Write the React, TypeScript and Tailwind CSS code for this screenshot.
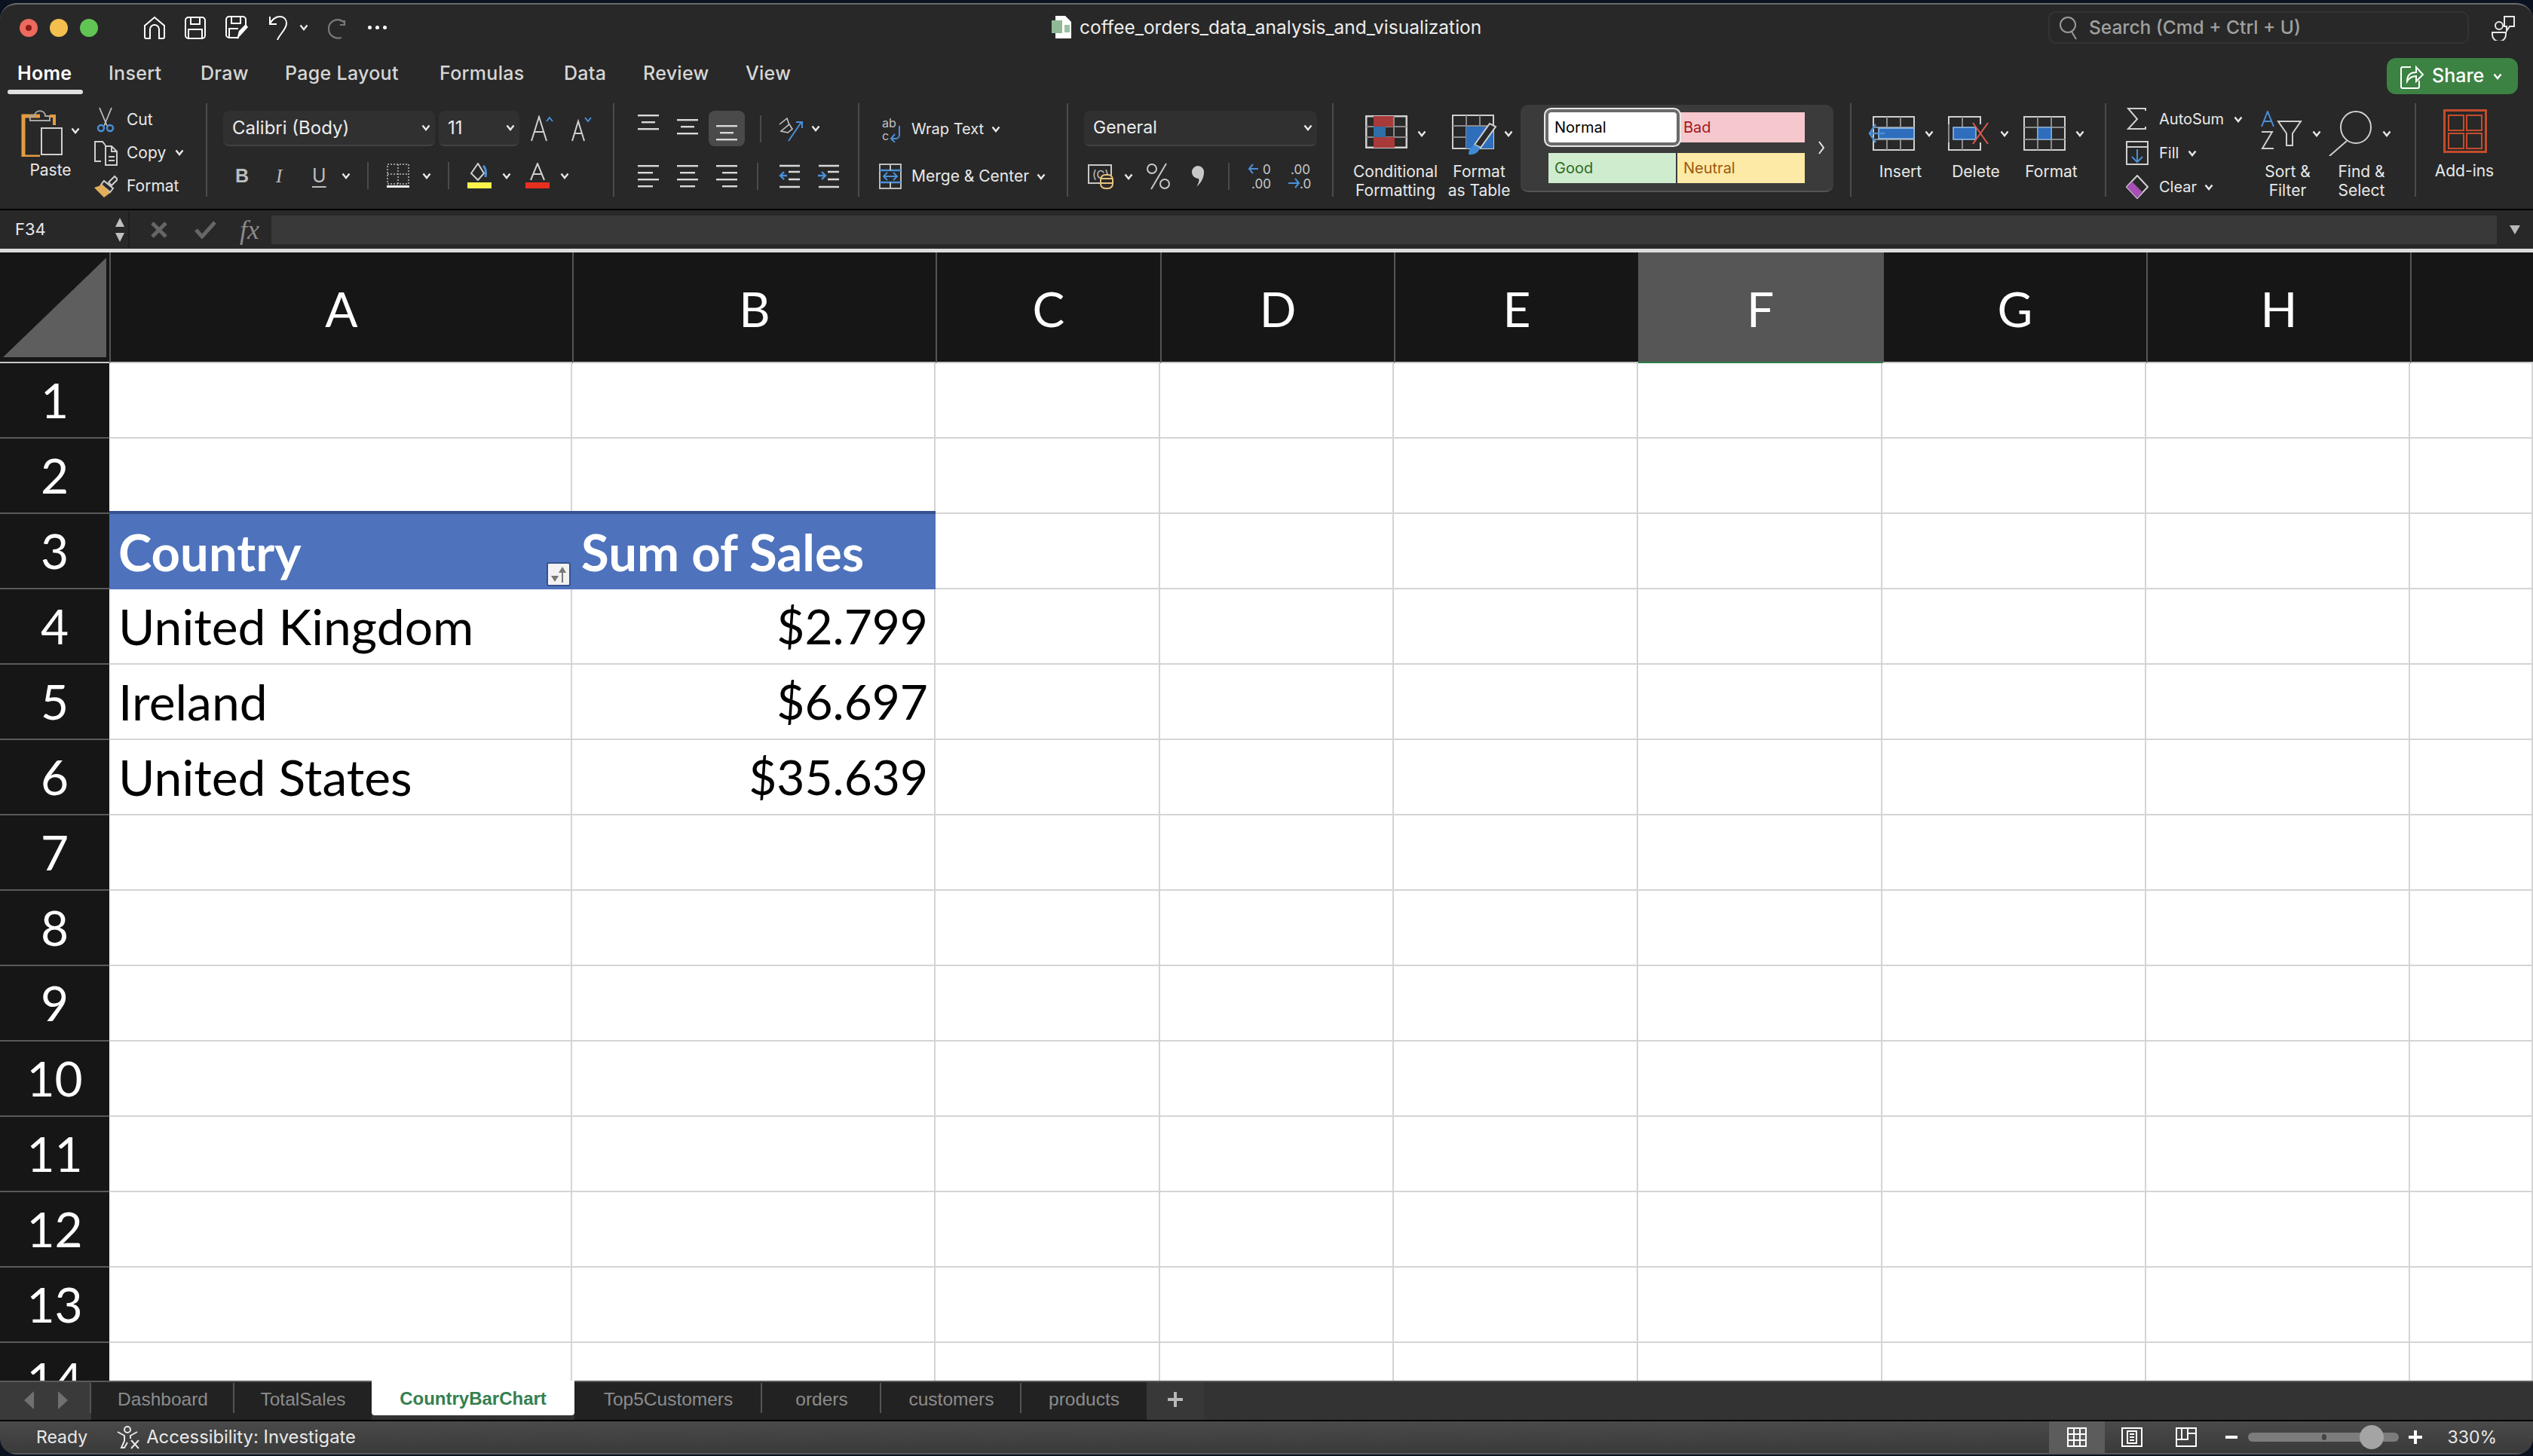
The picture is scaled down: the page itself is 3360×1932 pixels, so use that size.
import type { ReactNode } from 'react'

const LINE = '#cfcfcf'
const BLUE = '#4a90d9'

function Ico({ w, h, children, className }: { w: number; h: number; children: ReactNode; className?: string }) {
  return (
    <svg width={w} height={h} viewBox={`0 0 ${w} ${h}`} fill="none" className={`shrink-0 ${className ?? ''}`}>
      {children}
    </svg>
  )
}

function Chev({ className, color = '#e8e8e8' }: { className?: string; color?: string }) {
  return (
    <Ico w={12} h={9} className={className}>
      <path d="M1.5 1.5 6 7l4.5-5.5" stroke={color} strokeWidth={2.4} />
    </Ico>
  )
}

function AlignIcon({ y, mode }: { y: number; mode: 'l' | 'c' | 'r' | 'vt' | 'vm' | 'vb' }) {
  const rows = mode === 'vt' || mode === 'vm' || mode === 'vb'
  const off = mode === 'vt' ? 0 : mode === 'vm' ? 6 : 14
  if (rows) {
    return (
      <Ico w={30} h={44}>
        {[0, 1, 2].map(i => {
          const inset = i === 1 ? 5 : 0
          return <rect key={i} x={1 + inset} y={y + off + i * 9} width={28 - inset * 2} height={2.4} fill="#d8d8d8" />
        })}
      </Ico>
    )
  }
  return (
    <Ico w={30} h={32}>
      {[0, 1, 2, 3].map(i => {
        const short = i % 2 === 1
        const width = short ? 20 : 28
        const x = mode === 'l' ? 1 : mode === 'c' ? 15 - width / 2 : 29 - width
        return <rect key={i} x={x} y={1 + i * 9} width={width} height={2.4} fill="#d8d8d8" />
      })}
    </Ico>
  )
}

function SmallGrid({ children }: { children?: ReactNode }) {
  return (
    <Ico w={62} h={48}>
      <rect x={7} y={2} width={54} height={44} stroke={LINE} strokeWidth={2} />
      <path d="M7 16h54M7 32h54M25 2v44M43 2v44" stroke="#8c8c8c" strokeWidth={2} />
      {children}
    </Ico>
  )
}

function TopBar() {
  return (
    <div className="relative flex h-[67px] shrink-0 items-center pb-[6px]">
      <div className="flex w-[190px] shrink-0 gap-[16px] pl-[26px]">
        <span className="flex h-[24px] w-[24px] items-center justify-center rounded-full bg-[#ed6a5e]">
          <span className="h-[8px] w-[8px] rounded-full bg-[#8c1d18]" />
        </span>
        <span className="h-[24px] w-[24px] rounded-full bg-[#f4bf4f]" />
        <span className="h-[24px] w-[24px] rounded-full bg-[#61c554]" />
      </div>
      <div className="flex items-center">
        <Ico w={30} h={32} className="mr-[25px]">
          <path d="M2 13 15 2l13 11v15a2 2 0 0 1-2 2h-5V18a6 6 0 0 0-12 0v12H4a2 2 0 0 1-2-2z" stroke="#fff" strokeWidth={2} />
        </Ico>
        <Ico w={28} h={30} className="mr-[26px]">
          <path d="M1 5a4 4 0 0 1 4-4h18a4 4 0 0 1 4 4v20a4 4 0 0 1-4 4H5a4 4 0 0 1-4-4zM8 1v9h12V1M5 29V17h18v12" stroke="#fff" strokeWidth={2} />
        </Ico>
        <Ico w={32} h={32} className="mr-[24px]">
          <path d="M18 29H5a4 4 0 0 1-4-4V5a4 4 0 0 1 4-4h18a4 4 0 0 1 4 4v8M8 1v9h12V1M5 29V17h12" stroke="#fff" strokeWidth={2} />
          <path d="M15 31l3-11 9-9 3 4-9 10z" fill="#fff" />
        </Ico>
        <Ico w={28} h={34} className="mr-[14px]">
          <path d="M3 2v10h9M3 12c2-5 7-10 13-10 6 0 9 4 9 9 0 8-9 14-12 22" stroke="#fff" strokeWidth={2} />
        </Ico>
        <Chev className="mr-[23px]" />
        <Ico w={28} h={30} className="mr-[28px]">
          <path d="M25 5v6h-6M25 8C16 0 4 6 4 16s9 14 17 12" stroke="#7a7a7a" strokeWidth={2.2} />
        </Ico>
        <span className="flex gap-[5px]">
          <span className="h-[5px] w-[5px] rounded-full bg-white" />
          <span className="h-[5px] w-[5px] rounded-full bg-white" />
          <span className="h-[5px] w-[5px] rounded-full bg-white" />
        </span>
      </div>

      <div className="absolute left-[1395px] top-[14px] flex items-center">
        <Ico w={28} h={32} className="mr-[9px]">
          <path d="M5 1h13l8 8v22H5z" fill="#fff" />
          <rect x={0} y={7} width={14} height={17} fill="#8fb996" />
          <path d="M17 13h7v10h-7z" fill="#9bc0a2" />
        </Ico>
        <span className="text-[24.5px] leading-none text-[#ececec]">coffee_orders_data_analysis_and_visualization</span>
      </div>

      <div className="absolute left-[2717px] top-[9px] flex h-[43px] w-[558px] items-center rounded-[10px] border-2 border-[#333] pl-[12px]">
        <Ico w={26} h={34} className="mr-[14px]">
          <circle cx={12} cy={13} r={10} stroke="#9a9a9a" strokeWidth={2} />
          <path d="m17 22 6 10" stroke="#9a9a9a" strokeWidth={2} />
        </Ico>
        <span className="text-[24.5px] font-medium text-[#a0a0a0]">Search (Cmd + Ctrl + U)</span>
      </div>

      <Ico w={32} h={34} className="absolute left-[3305px] top-[14px]">
        <circle cx={10} cy={14} r={5} stroke="#e8e8e8" strokeWidth={2} />
        <path d="M1 23h18v3a8 8 0 0 1-18 0z" stroke="#e8e8e8" strokeWidth={2} />
        <path d="M17 2h13v13h-6l-4 6v-6h-3z" stroke="#e8e8e8" strokeWidth={2} />
      </Ico>
    </div>
  )
}

const TABS: [string, number][] = [
  ['Home', 121],
  ['Insert', 122],
  ['Draw', 112],
  ['Page Layout', 205],
  ['Formulas', 165],
  ['Data', 105],
  ['Review', 136],
  ['View', 100],
]

function TabBar() {
  return (
    <div className="relative flex h-[52px] shrink-0 items-start pl-[23px] pt-[10px]">
      {TABS.map(([t, w], i) => (
        <div key={t} style={{ width: w }} className={`text-[25px] leading-[28px] tracking-[0.3px] ${i === 0 ? 'font-semibold text-white' : 'font-medium text-[#d6d6d6]'}`}>
          {t}
          {i === 0 && <div className="absolute left-[10px] top-[46px] h-[6px] w-[100px] rounded-[3px] bg-[#e0e0e0]" />}
        </div>
      ))}
      <div className="absolute left-[3166px] top-[4px] flex h-[48px] w-[174px] items-center rounded-[12px] bg-[#3c8243] pl-[18px] text-white">
        <Ico w={32} h={36} className="mr-[10px]">
          <path d="M14 6H3a2 2 0 0 0-2 2v24a2 2 0 0 0 2 2h20a2 2 0 0 0 2-2v-8" stroke="#fff" strokeWidth={2} />
          <path d="M9 25c0-9 5-12 12-12V6l9 10-9 9v-7c-5 0-9 2-12 7z" stroke="#fff" strokeWidth={2} />
        </Ico>
        <span className="mr-[12px] text-[25px] font-medium">Share</span>
        <Chev color="#fff" />
      </div>
    </div>
  )
}

function Group({ w, children, border = true, className }: { w: number; children: ReactNode; border?: boolean; className?: string }) {
  return (
    <div style={{ width: w }} className={`relative h-[124px] shrink-0 ${border ? 'border-r-2 border-[#4b4b4b]' : ''} ${className ?? ''}`}>
      {children}
    </div>
  )
}

function Select({ w, label, size = 'text-[24px]' }: { w: number; label: string; size?: string }) {
  return (
    <div style={{ width: w }} className="flex h-[47px] shrink-0 items-center justify-between rounded-[8px] border-b-2 border-[#424242] bg-[#303030] pl-[12px] pr-[6px]">
      <span className={`${size} text-[#ececec]`}>{label}</span>
      <Chev />
    </div>
  )
}

function BigLabel({ children }: { children: ReactNode }) {
  return <div className="text-center text-[21px] leading-[25px] text-[#e8e8e8]">{children}</div>
}

function ClipboardGroup() {
  return (
    <Group w={275} className="flex">
      <div className="flex w-[124px] shrink-0 flex-col items-center pl-[10px] pt-[9px]">
        <div className="flex items-center">
          <Ico w={58} h={62}>
            <path d="M25 8H3v54h22" stroke="#e29c42" strokeWidth={5} />
            <path d="M12 14V8h6c0-9 14-9 14 0h6v6z" stroke="#a8a8a8" strokeWidth={2} />
            <path d="M38 8h6v12" stroke="#e29c42" strokeWidth={4} />
            <rect x={27} y={24} width={27} height={35} stroke={LINE} strokeWidth={2} />
          </Ico>
          <Chev className="ml-[8px] mt-[-8px]" />
        </div>
        <span className="mt-[6px] text-[21px] leading-[24px] text-[#e8e8e8]">Paste</span>
      </div>
      <div className="flex flex-col gap-[13px] pt-[6px]">
        <div className="flex h-[31px] items-center">
          <Ico w={32} h={34} className="mr-[12px]">
            <path d="m8 1 10 24M24 1 14 25" stroke="#bdbdbd" strokeWidth={1.8} />
            <circle cx={10} cy={28} r={4} stroke={BLUE} strokeWidth={2.4} />
            <circle cx={22} cy={28} r={4} stroke={BLUE} strokeWidth={2.4} />
          </Ico>
          <span className="text-[21px] text-[#e8e8e8]">Cut</span>
        </div>
        <div className="flex h-[31px] items-center">
          <Ico w={32} h={34} className="mr-[12px]">
            <path d="M10 28H2V2h10l4 5" stroke={LINE} strokeWidth={2} />
            <path d="M16 8h8l7 7v18H16zM24 8v7h7M20 22h8M20 27h8" stroke={LINE} strokeWidth={2} />
          </Ico>
          <span className="mr-[12px] text-[21px] text-[#e8e8e8]">Copy</span>
          <Chev />
        </div>
        <div className="flex h-[31px] items-center">
          <Ico w={32} h={34} className="mr-[12px]">
            <path d="m20 12 8-8 4 4-8 8z" stroke={LINE} strokeWidth={2} />
            <path d="m14 10 12 10-4 5L10 15z" stroke={LINE} strokeWidth={2} />
            <path d="M1 19 12 15l10 11-8 6z" fill="#e3ad5a" />
          </Ico>
          <span className="text-[21px] text-[#e8e8e8]">Format</span>
        </div>
      </div>
    </Group>
  )
}

function FontGroup() {
  return (
    <Group w={540} className="flex flex-col gap-[21px] pl-[21px] pt-[10px]">
      <div className="flex items-center">
        <Select w={281} label="Calibri (Body)" />
        <div className="ml-[5px] mr-[15px]"><Select w={107} label="11" /></div>
        <Ico w={30} h={36} className="mr-[24px]">
          <path d="M1 34 11 2l10 32M5 22h12" stroke="#d0d0d0" strokeWidth={2} />
          <path d="m21 8 4-5 4 5" stroke={BLUE} strokeWidth={2} />
        </Ico>
        <Ico w={28} h={36}>
          <path d="M1 34 9 8l8 26M4 24h10" stroke="#d0d0d0" strokeWidth={2} />
          <path d="m18 3 4 5 4-5" stroke={BLUE} strokeWidth={2} />
        </Ico>
      </div>
      <div className="flex items-center">
        <span className="w-[56px] pl-[16px] text-[25px] font-bold leading-none text-[#bdbdbd] [font-family:'Liberation_Sans',sans-serif]">B</span>
        <span className="w-[50px] pl-[14px] text-[25px] italic leading-none text-[#bdbdbd] [font-family:'Liberation_Serif',serif]">I</span>
        <span className="w-[51px] pl-[12px] text-[25px] leading-none text-[#bdbdbd] underline underline-offset-[5px]">U</span>
        <Chev className="mr-[22px]" />
        <div className="mr-[23px] h-[36px] w-[2px] bg-[#4b4b4b]" />
        <Ico w={32} h={34} className="mr-[16px]">
          <path d="M2 2h28v26H2zM16 2v26M2 15h28" stroke="#bdbdbd" strokeWidth={1.5} strokeDasharray="2 2" />
          <rect x={1} y={30} width={30} height={3} fill="#f0f0f0" />
        </Ico>
        <Chev className="mr-[22px]" />
        <div className="mr-[24px] h-[36px] w-[2px] bg-[#4b4b4b]" />
        <div className="mr-[14px] flex flex-col items-center">
          <Ico w={32} h={24}>
            <path d="M5 14 14 1l8 13-8 9z" stroke="#d0d0d0" strokeWidth={2} />
            <path d="M21 4c4 3 4 9 3 15" stroke={BLUE} strokeWidth={3} />
          </Ico>
          <span className="mt-[2px] h-[8px] w-[32px] bg-[#fdf24b]" />
        </div>
        <Chev className="mr-[19px]" />
        <div className="mr-[14px] flex flex-col items-center">
          <Ico w={32} h={24}>
            <path d="M7 23 16 1l9 22M10 15h12" stroke="#d0d0d0" strokeWidth={2} />
          </Ico>
          <span className="mt-[2px] h-[8px] w-[32px] bg-[#e8301f]" />
        </div>
        <Chev />
      </div>
    </Group>
  )
}

function AlignGroup() {
  return (
    <Group w={325} className="flex flex-col gap-[16px] pl-[30px] pt-[10px]">
      <div className="flex h-[47px] items-center">
        <div className="w-[52px]"><AlignIcon y={3} mode="vt" /></div>
        <div className="w-[43px]"><AlignIcon y={3} mode="vm" /></div>
        <div className="flex h-[47px] w-[48px] items-center justify-center rounded-[8px] bg-[#4a4a4a]"><AlignIcon y={3} mode="vb" /></div>
        <div className="ml-[20px] mr-[22px] h-[36px] w-[2px] bg-[#4b4b4b]" />
        <Ico w={34} h={34} className="mr-[10px]">
          <path d="m14 33 17-25M24 8h8v8" stroke={BLUE} strokeWidth={2} />
          <path d="m2 11 10-8 3 9M4 20l11-9 4 6-6 5z" stroke="#c8c8c8" strokeWidth={1.6} />
        </Ico>
        <Chev />
      </div>
      <div className="flex h-[48px] items-center">
        <div className="w-[52px]"><AlignIcon y={0} mode="l" /></div>
        <div className="w-[52px]"><AlignIcon y={0} mode="c" /></div>
        <div className="w-[37px]"><AlignIcon y={0} mode="r" /></div>
        <div className="ml-[18px] mr-[26px] h-[36px] w-[2px] bg-[#4b4b4b]" />
        <Ico w={30} h={32} className="mr-[22px]">
          <path d="M2 2h27M14 10h15M14 20h15M2 30h27" stroke="#d8d8d8" strokeWidth={2.4} />
          <path d="M12 15H3m5-5-5 5 5 5" stroke={BLUE} strokeWidth={2.4} />
        </Ico>
        <Ico w={30} h={32}>
          <path d="M2 2h27M14 10h15M14 20h15M2 30h27" stroke="#d8d8d8" strokeWidth={2.4} />
          <path d="M1 15h10m-5-5 5 5-5 5" stroke={BLUE} strokeWidth={2.4} />
        </Ico>
      </div>
    </Group>
  )
}

function WrapGroup() {
  return (
    <Group w={277} className="flex flex-col gap-[27px] pl-[26px] pt-[16px]">
      <div className="flex h-[36px] items-center">
        <div className="w-[43px]">
          <Ico w={32} h={36} className="ml-[3px]">
            <text x={1} y={16} fontSize={16} fill="#c0c0c0">ab</text>
            <text x={1} y={33} fontSize={16} fill="#c0c0c0">c</text>
            <path d="M24 14v12a5 5 0 0 1-5 5h-6m5-6-5 6 5 5" stroke={BLUE} strokeWidth={2} />
          </Ico>
        </div>
        <span className="mr-[10px] text-[20px] text-[#e8e8e8]">Wrap Text</span>
        <Chev />
      </div>
      <div className="flex h-[36px] items-center">
        <div className="w-[43px]">
          <Ico w={30} h={34}>
            <rect x={1} y={1} width={28} height={32} stroke="#bdbdbd" strokeWidth={2} />
            <path d="M1 9h28M1 25h28" stroke={BLUE} strokeWidth={2.4} />
            <path d="M6 17h18m-13-5-5 5 5 5m8-10 5 5-5 5" stroke={BLUE} strokeWidth={2} />
            <path d="M15 1v8M15 25v8" stroke="#bdbdbd" strokeWidth={2} />
          </Ico>
        </div>
        <span className="mr-[10px] text-[21px] text-[#e8e8e8]">Merge &amp; Center</span>
        <Chev />
      </div>
    </Group>
  )
}

function NumberGroup() {
  return (
    <Group w={352} className="flex flex-col gap-[16px] pl-[21px] pt-[10px]">
      <Select w={309} label="General" size="text-[23px]" />
      <div className="flex h-[48px] items-center">
        <Ico w={34} h={34} className="ml-[5px] mr-[14px]">
          <rect x={1} y={2} width={30} height={24} stroke="#c8c8c8" strokeWidth={2} />
          <text x={6} y={20} fontSize={15} fill="#c8c8c8">{'(C)'}</text>
          <rect x={17} y={15} width={16} height={18} rx={6} fill="#2a2a2a" stroke="#e6c27a" strokeWidth={2} />
          <path d="M17 20h16M17 26h16" stroke="#e6c27a" strokeWidth={2} />
        </Ico>
        <Chev className="mr-[18px]" />
        <Ico w={32} h={38} className="mr-[27px]">
          <circle cx={7} cy={9} r={6} stroke="#c8c8c8" strokeWidth={2} />
          <circle cx={24} cy={29} r={6} stroke="#c8c8c8" strokeWidth={2} />
          <path d="M26 2 6 36" stroke="#c8c8c8" strokeWidth={2} />
        </Ico>
        <Ico w={20} h={30} className="mr-[29px]">
          <path d="M9 1a8 8 0 0 1 8 9c0 7-4 14-10 19 3-5 4-8 3-11a8.500 8.500 0 0 1-1-17z" fill="#c8c8c8" />
        </Ico>
        <div className="mr-[24px] h-[36px] w-[2px] bg-[#4b4b4b]" />
        <Ico w={33} h={40} className="mr-[20px]">
          <path d="M14 10H2m5-6-5 6 5 6" stroke={BLUE} strokeWidth={2} />
          <text x={20} y={17} fontSize={17} fill="#c8c8c8">0</text>
          <text x={5} y={36} fontSize={17} fill="#c8c8c8">.00</text>
        </Ico>
        <Ico w={33} h={40}>
          <text x={4} y={17} fontSize={17} fill="#c8c8c8">.00</text>
          <path d="M1 29h14m-5-6 5 6-5 6" stroke={BLUE} strokeWidth={2} />
          <text x={16} y={36} fontSize={17} fill="#c8c8c8">.0</text>
        </Ico>
      </div>
    </Group>
  )
}

function StyleCell({ label, bg, fg }: { label: string; bg: string; fg: string }) {
  return (
    <div style={{ backgroundColor: bg, color: fg }} className="flex h-[40px] w-[169px] items-center pl-[8px] text-[20px]">
      {label}
    </div>
  )
}

function StylesGroup() {
  return (
    <div className="flex h-[124px] shrink-0">
      <div className="flex w-[248px] flex-col pl-[42px] pt-[16px]">
        <div className="flex items-start">
          <Ico w={56} h={44}>
            <rect x={1} y={1} width={54} height={42} stroke={LINE} strokeWidth={3} />
            <path d="M1 15h54M1 29h54M21 1v42M38 1v42" stroke="#8a8a8a" strokeWidth={2} />
            <rect x={11} y={1} width={26} height={14} fill="#a83a3a" />
            <rect x={11} y={15} width={16} height={14} fill="#2f6ea8" />
            <rect x={11} y={29} width={28} height={14} fill="#a83a3a" />
          </Ico>
          <Chev className="ml-[13px] mr-[34px] mt-[20px]" />
          <Ico w={60} h={55} className="mt-[-1px]">
            <rect x={1} y={1} width={54} height={44} stroke={LINE} strokeWidth={2} />
            <path d="M1 15h54M1 30h54M19 1v44M37 1v44" stroke="#8a8a8a" strokeWidth={2} />
            <rect x={19} y={16} width={36} height={29} fill="#2e6ebd" />
            <path d="M30 40 50 12l8 4-20 28z" fill="#2a2a2a" stroke="#d0d0d0" strokeWidth={2} />
            <path d="M30 40c-4 2-8 6-8 13 8 1 14-3 15-9z" fill="#3f8ad4" />
          </Ico>
          <Chev className="ml-[9px] mt-[20px]" />
        </div>
        <div className="ml-[-16px] mt-[8px] flex">
          <div className="w-[113px]"><BigLabel>Conditional<br />Formatting</BigLabel></div>
          <div className="w-[114px]"><BigLabel>Format<br />as Table</BigLabel></div>
        </div>
      </div>
      <div className="mt-[2px] flex h-[116px] w-[415px] items-center rounded-[10px] border-b-2 border-[#555] bg-[#3b3b3b] pl-[37px]">
        <div className="grid w-[341px] grid-cols-[171px_170px] items-center gap-y-[14px]">
          <div className="relative flex h-[40px] w-[170px] items-center rounded-[4px] bg-white pl-[8px] text-[20px] text-black shadow-[0_0_0_4px_#6b6b6b,0_0_0_6px_#e8e8e8]">
            Normal
          </div>
          <StyleCell label="Bad" bg="#f7c7ce" fg="#9c1c1c" />
          <StyleCell label="Good" bg="#cfeccf" fg="#2f6a1f" />
          <StyleCell label="Neutral" bg="#fdeaa6" fg="#9a5a10" />
        </div>
        <Ico w={10} h={20} className="ml-[16px]">
          <path d="m2 2 6 8-6 8" stroke="#e8e8e8" strokeWidth={2} />
        </Ico>
      </div>
      <div className="ml-[22px] h-[124px] w-[2px] bg-[#4b4b4b]" />
    </div>
  )
}

function CellsGroup() {
  return (
    <Group w={338} className="pl-[22px] pt-[16px]">
      <div className="flex items-start">
        <SmallGrid>
          <rect x={14} y={17} width={47} height={14} fill="#2e6ebd" stroke="#9ac2ec" strokeWidth={1.5} />
          <path d="M22 24H2m8-12L2 24l8 12" stroke={BLUE} strokeWidth={2.5} />
        </SmallGrid>
        <Chev className="ml-[13px] mr-[18px] mt-[20px]" />
        <Ico w={58} h={48}>
          <path d="M2 12V2h42v10M2 36v10h42V36" stroke={LINE} strokeWidth={2} />
          <path d="M2 12v24M20 2v44" stroke="#8a8a8a" strokeWidth={2} />
          <rect x={8} y={16} width={30} height={16} fill="#2e6ebd" stroke="#9ac2ec" strokeWidth={1.5} />
          <path d="m34 10 20 28M54 10 34 38" stroke="#dd5a4a" strokeWidth={2} />
        </Ico>
        <Chev className="ml-[12px] mr-[19px] mt-[20px]" />
        <Ico w={56} h={50} className="mt-[-2px]">
          <rect x={1} y={4} width={54} height={44} stroke={LINE} strokeWidth={2} />
          <path d="M1 18h54M1 34h54M19 4v44M37 4v44" stroke="#8a8a8a" strokeWidth={2} />
          <rect x={19} y={18} width={18} height={16} fill="#2e6ebd" stroke="#9ac2ec" />
        </Ico>
        <Chev className="ml-[13px] mt-[20px]" />
      </div>
      <div className="mt-[14px] flex">
        <div className="w-[86px]"><BigLabel>Insert</BigLabel></div>
        <div className="ml-[17px] w-[80px]"><BigLabel>Delete</BigLabel></div>
        <div className="ml-[20px] w-[80px]"><BigLabel>Format</BigLabel></div>
      </div>
    </Group>
  )
}

function EditingGroup() {
  return (
    <Group w={411} className="flex">
      <div className="flex w-[204px] shrink-0 flex-col gap-[15px] pl-[26px] pt-[6px]">
        <div className="flex h-[30px] items-center">
          <Ico w={30} h={30} className="mr-[14px]">
            <path d="M26 4V1H3l12 14L3 28h23v-3" stroke={LINE} strokeWidth={2} />
          </Ico>
          <span className="mr-[13px] text-[20px] text-[#e8e8e8]">AutoSum</span>
          <Chev />
        </div>
        <div className="flex h-[30px] items-center">
          <Ico w={30} h={32} className="mr-[14px]">
            <rect x={1} y={1} width={28} height={30} stroke={LINE} strokeWidth={2} />
            <path d="M1 8h28" stroke={LINE} strokeWidth={2} />
            <path d="M15 11v16m-7-6 7 7 7-7" stroke={BLUE} strokeWidth={2} />
          </Ico>
          <span className="mr-[12px] text-[20px] text-[#e8e8e8]">Fill</span>
          <Chev />
        </div>
        <div className="flex h-[30px] items-center">
          <Ico w={30} h={32} className="mr-[14px]">
            <path d="M15 1 29 16 15 31 1 16z" stroke={LINE} strokeWidth={2} />
            <path d="M8 9 22 23l-7 8L1 16z" fill="#a64fb5" />
          </Ico>
          <span className="mr-[10px] text-[20px] text-[#e8e8e8]">Clear</span>
          <Chev />
        </div>
      </div>
      <div className="flex flex-col pt-[10px]">
        <div className="flex items-start">
          <Ico w={58} h={54}>
            <path d="M2 21 10 1l8 20M5 14h10" stroke={BLUE} strokeWidth={2} />
            <path d="M2 28h14L3 50h15" stroke={LINE} strokeWidth={2} />
            <path d="M24 14h30L43 30v16h-8V30z" stroke={LINE} strokeWidth={2} />
          </Ico>
          <Chev className="ml-[11px] mr-[9px] mt-[26px]" />
          <Ico w={58} h={60}>
            <ellipse cx={37} cy={22} rx={20} ry={21} stroke={LINE} strokeWidth={2} />
            <path d="M25 40 2 60" stroke={LINE} strokeWidth={2} />
          </Ico>
          <Chev className="ml-[14px] mt-[26px]" />
        </div>
        <div className="ml-[-6px] mt-[8px] flex">
          <div className="w-[85px]"><BigLabel>Sort &amp;<br />Filter</BigLabel></div>
          <div className="ml-[13px] w-[85px]"><BigLabel>Find &amp;<br />Select</BigLabel></div>
        </div>
      </div>
    </Group>
  )
}

function AddinsGroup() {
  return (
    <div className="flex h-[124px] w-[128px] shrink-0 flex-col items-center pt-[8px]">
      <Ico w={58} h={58} className="ml-[2px]">
        <rect x={1.5} y={1.5} width={55} height={55} stroke="#c44c2c" strokeWidth={3} />
        <rect x={7} y={8} width={20} height={20} stroke="#c44c2c" strokeWidth={2} />
        <rect x={31} y={8} width={20} height={20} stroke="#c44c2c" strokeWidth={2} />
        <rect x={7} y={32} width={20} height={20} stroke="#c44c2c" strokeWidth={2} />
        <rect x={31} y={32} width={20} height={20} stroke="#c44c2c" strokeWidth={2} />
      </Ico>
      <div className="mt-[11px]"><BigLabel>Add-ins</BigLabel></div>
    </div>
  )
}

function Ribbon() {
  return (
    <div className="flex h-[152px] shrink-0 pt-[12px]">
      <ClipboardGroup />
      <FontGroup />
      <AlignGroup />
      <WrapGroup />
      <NumberGroup />
      <StylesGroup />
      <CellsGroup />
      <EditingGroup />
      <AddinsGroup />
    </div>
  )
}

function FormulaBar() {
  return (
    <div className="flex h-[56px] shrink-0 items-center border-b-[5px] border-[#dcdcdc] bg-[#282828]" >
      <span className="w-[148px] pl-[20px] text-[22px] text-[#e8e8e8]">F34</span>
      <div className="flex w-[22px] flex-col items-center gap-[6px]">
        <Ico w={14} h={14}><path d="M7 1l6 12H1z" fill="#c0c0c0" /></Ico>
        <Ico w={14} h={14}><path d="M7 13 1 1h12z" fill="#c0c0c0" /></Ico>
      </div>
      <div className="h-[48px] w-[2px] bg-[#1e1e1e]" />
      <div className="flex w-[188px] items-center pl-[28px]">
        <Ico w={22} h={22} className="mr-[36px]"><path d="m2 2 18 18M20 2 2 20" stroke="#666" strokeWidth={5} /></Ico>
        <Ico w={30} h={24} className="mr-[30px]"><path d="m2 12 8 9L27 2" stroke="#666" strokeWidth={5} /></Ico>
        <span className="text-[36px] italic leading-none text-[#8a8a8a] [font-family:'Liberation_Serif',serif]">fx</span>
      </div>
      <div className="h-[38px] w-[2952px] bg-[#393939]" />
      <Ico w={16} h={14} className="ml-[16px]"><path d="M1 1h14L8 13z" fill="#b8b8b8" /></Ico>
    </div>
  )
}

const COLS = ['A', 'B', 'C', 'D', 'E', 'F', 'G', 'H', '']
const LAT = "[font-family:Lato,'Liberation_Sans',sans-serif]"

function DataCell({ row, col }: { row: number; col: number }) {
  const data: Record<number, [string, string]> = {
    3: ['Country', 'Sum of Sales'],
    4: ['United Kingdom', '$2.799'],
    5: ['Ireland', '$6.697'],
    6: ['United States', '$35.639'],
  }
  const d = data[row]
  if (row === 3 && col < 2) {
    return (
      <div className="relative z-10 flex h-[100px] items-center bg-[#4e72bc] pl-[12px] text-[67px] font-bold leading-none text-white shadow-[0_-4px_0_#35528f]">
        {d[col]}
        {col === 0 && (
          <div className="absolute bottom-[4px] right-[2px] flex h-[32px] w-[32px] items-center justify-center rounded-[3px] border-2 border-[#35528f] bg-[#f2f2f2]">
            <Ico w={22} h={24}>
              <path d="M1 14h10l-5 8z" fill="#777" />
              <path d="M16 2l5 8h-4v13h-2V10h-4z" fill="#777" />
            </Ico>
          </div>
        )}
      </div>
    )
  }
  return (
    <div className={`flex h-[100px] items-center border-b-2 border-r-2 border-[#d4d4d4] bg-white leading-none text-black ${col === 1 ? 'justify-end pr-[8px] text-[64px]' : 'pl-[12px] text-[66px]'}`}>
      {d && col < 2 ? d[col] : ''}
    </div>
  )
}

function Sheet() {
  const rows = Array.from({ length: 14 }, (_, i) => i + 1)
  return (
    <div className={`min-h-0 flex-1 overflow-hidden bg-white ${LAT}`}>
      <div className="grid grid-cols-[145px_614px_482px_298px_310px_324px_324px_350px_350px_163px]">
        <div className="flex h-[147px] items-center justify-center border-b-2 border-[#c8c8c8] bg-[#161616]">
          <Ico w={137} h={132}><path d="M137 0v132H0z" fill="#5e5e5e" /></Ico>
        </div>
        {COLS.map((c, i) => (
          <div key={i} className={`flex h-[147px] items-center justify-center border-b-2 pt-[4px] text-[64px] leading-none text-white ${c === 'F' ? 'border-[#2f7d4a] bg-[#565656]' : 'border-[#c8c8c8] border-l-2 border-l-[#555] bg-[#161616]'}`}>
            {c}
          </div>
        ))}
        {rows.flatMap(r => [
          <div key={`h${r}`} className="flex h-[100px] items-center justify-center border-b-2 border-[#5a5a5a] bg-[#161616] text-[64px] leading-none text-white">
            {r}
          </div>,
          ...COLS.map((_, c) => <DataCell key={`${r}-${c}`} row={r} col={c} />),
        ])}
      </div>
    </div>
  )
}

const SHEETS: [string, number][] = [
  ['Dashboard', 190],
  ['TotalSales', 182],
  ['CountryBarChart', 269],
  ['Top5Customers', 249],
  ['orders', 158],
  ['customers', 186],
  ['products', 166],
]

function SheetTabs() {
  return (
    <div className="flex h-[54px] shrink-0 border-t-2 border-b-2 border-t-[#5a5a5a] border-b-black bg-[#333]">
      <div className="flex w-[121px] items-center justify-center gap-[30px] bg-[#3a3a3a] pb-[2px]">
        <Ico w={15} h={26}><path d="M14 1v24L1 13z" fill="#707070" /></Ico>
        <Ico w={15} h={26}><path d="M1 1v24l13-12z" fill="#707070" /></Ico>
      </div>
      {SHEETS.map(([name, w]) => {
        const active = name === 'CountryBarChart'
        return (
          <div key={name} style={{ width: w }} className={active ? 'relative -mt-[2px] mb-[6px] flex items-center justify-center rounded-b-[4px] bg-white pt-[2px]' : 'flex items-center justify-center bg-[#222]'}>
            {!active && <span className="mb-[8px] ml-[-2px] mr-auto h-[40px] w-[2px] bg-[#555]" />}
            <span className={`[font-family:'Liberation_Sans',sans-serif] ${active ? 'text-[24px] font-bold text-[#35804f]' : 'mr-auto pb-[4px] text-[24.5px] text-[#8c8c8c]'}`}>{name}</span>
          </div>
        )
      })}
      <div className="flex w-[76px] items-start justify-center bg-[#383838] pt-[12px]">
        <Ico w={22} h={22}><path d="M11 1v20M1 11h20" stroke="#b8b8b8" strokeWidth={4} /></Ico>
      </div>
    </div>
  )
}

function StatusBar() {
  return (
    <div className="flex h-[44px] shrink-0 items-center justify-between border-b-2 border-[#5a5a5a] bg-gradient-to-b from-[#4a4a4a] to-[#3a3a3a] pl-[48px]">
      <div className="flex items-center">
        <span className="mr-[38px] text-[23px] text-[#e8e8e8]">Ready</span>
        <Ico w={32} h={32} className="mr-[8px]">
          <circle cx={15} cy={6} r={4} stroke="#e8e8e8" strokeWidth={2} />
          <path d="M2 9l9 5v7l-4 9 4 0 4-7M28 9l-9 5v4" stroke="#e8e8e8" strokeWidth={2} />
          <path d="m20 20 10 11M30 20 20 31" stroke="#e8e8e8" strokeWidth={2} />
        </Ico>
        <span className="text-[23.8px] text-[#e8e8e8]">Accessibility: Investigate</span>
      </div>
      <div className="flex h-full items-center pr-[48px]">
        <div className="flex h-[42px] w-[74px] items-center justify-center bg-[#5c5c5c]">
          <Ico w={26} h={26}><path d="M1 1h24v24H1zM1 9h24M1 17h24M9 1v24M17 1v24" stroke="#fff" strokeWidth={2} /></Ico>
        </div>
        <Ico w={28} h={26} className="ml-[22px]"><path d="M1 1h26v24H1zM8 5h12v16H8zM11 9h6M11 13h6M11 17h6" stroke="#fff" strokeWidth={2} /></Ico>
        <Ico w={28} h={26} className="ml-[44px]"><path d="M1 1h26v24H1zM1 16h15V1M8 1v15M16 8h11" stroke="#fff" strokeWidth={2} /></Ico>
        <span className="ml-[38px] h-[4px] w-[16px] bg-white" />
        <div className="relative ml-[14px] h-[12px] w-[200px] rounded-full bg-[#7c7c7c]">
          <span className="absolute left-[98px] top-[2px] h-[8px] w-[6px] rounded-full bg-[#444]" />
          <span className="absolute left-[148px] top-[-10px] h-[32px] w-[32px] rounded-full bg-[#a4a4a4]" />
        </div>
        <Ico w={18} h={18} className="ml-[13px]"><path d="M9 0v18M0 9h18" stroke="#fff" strokeWidth={4} /></Ico>
        <span className="ml-[33px] text-[23px] text-[#e8e8e8]">330%</span>
      </div>
    </div>
  )
}

export default function App() {
  return (
    <div className="h-[1932px] w-[3360px] overflow-hidden bg-[#0b1220] pb-[2px] pt-[4px] [font-family:Inter,'Liberation_Sans',sans-serif]">
      <div className="flex h-full flex-col overflow-hidden rounded-[22px] border-t-2 border-[#6b6b6b] bg-[#282828]">
        <TopBar />
        <TabBar />
        <Ribbon />
        <div className="h-[2px] shrink-0 bg-black" />
        <FormulaBar />
        <Sheet />
        <SheetTabs />
        <StatusBar />
      </div>
    </div>
  )
}
